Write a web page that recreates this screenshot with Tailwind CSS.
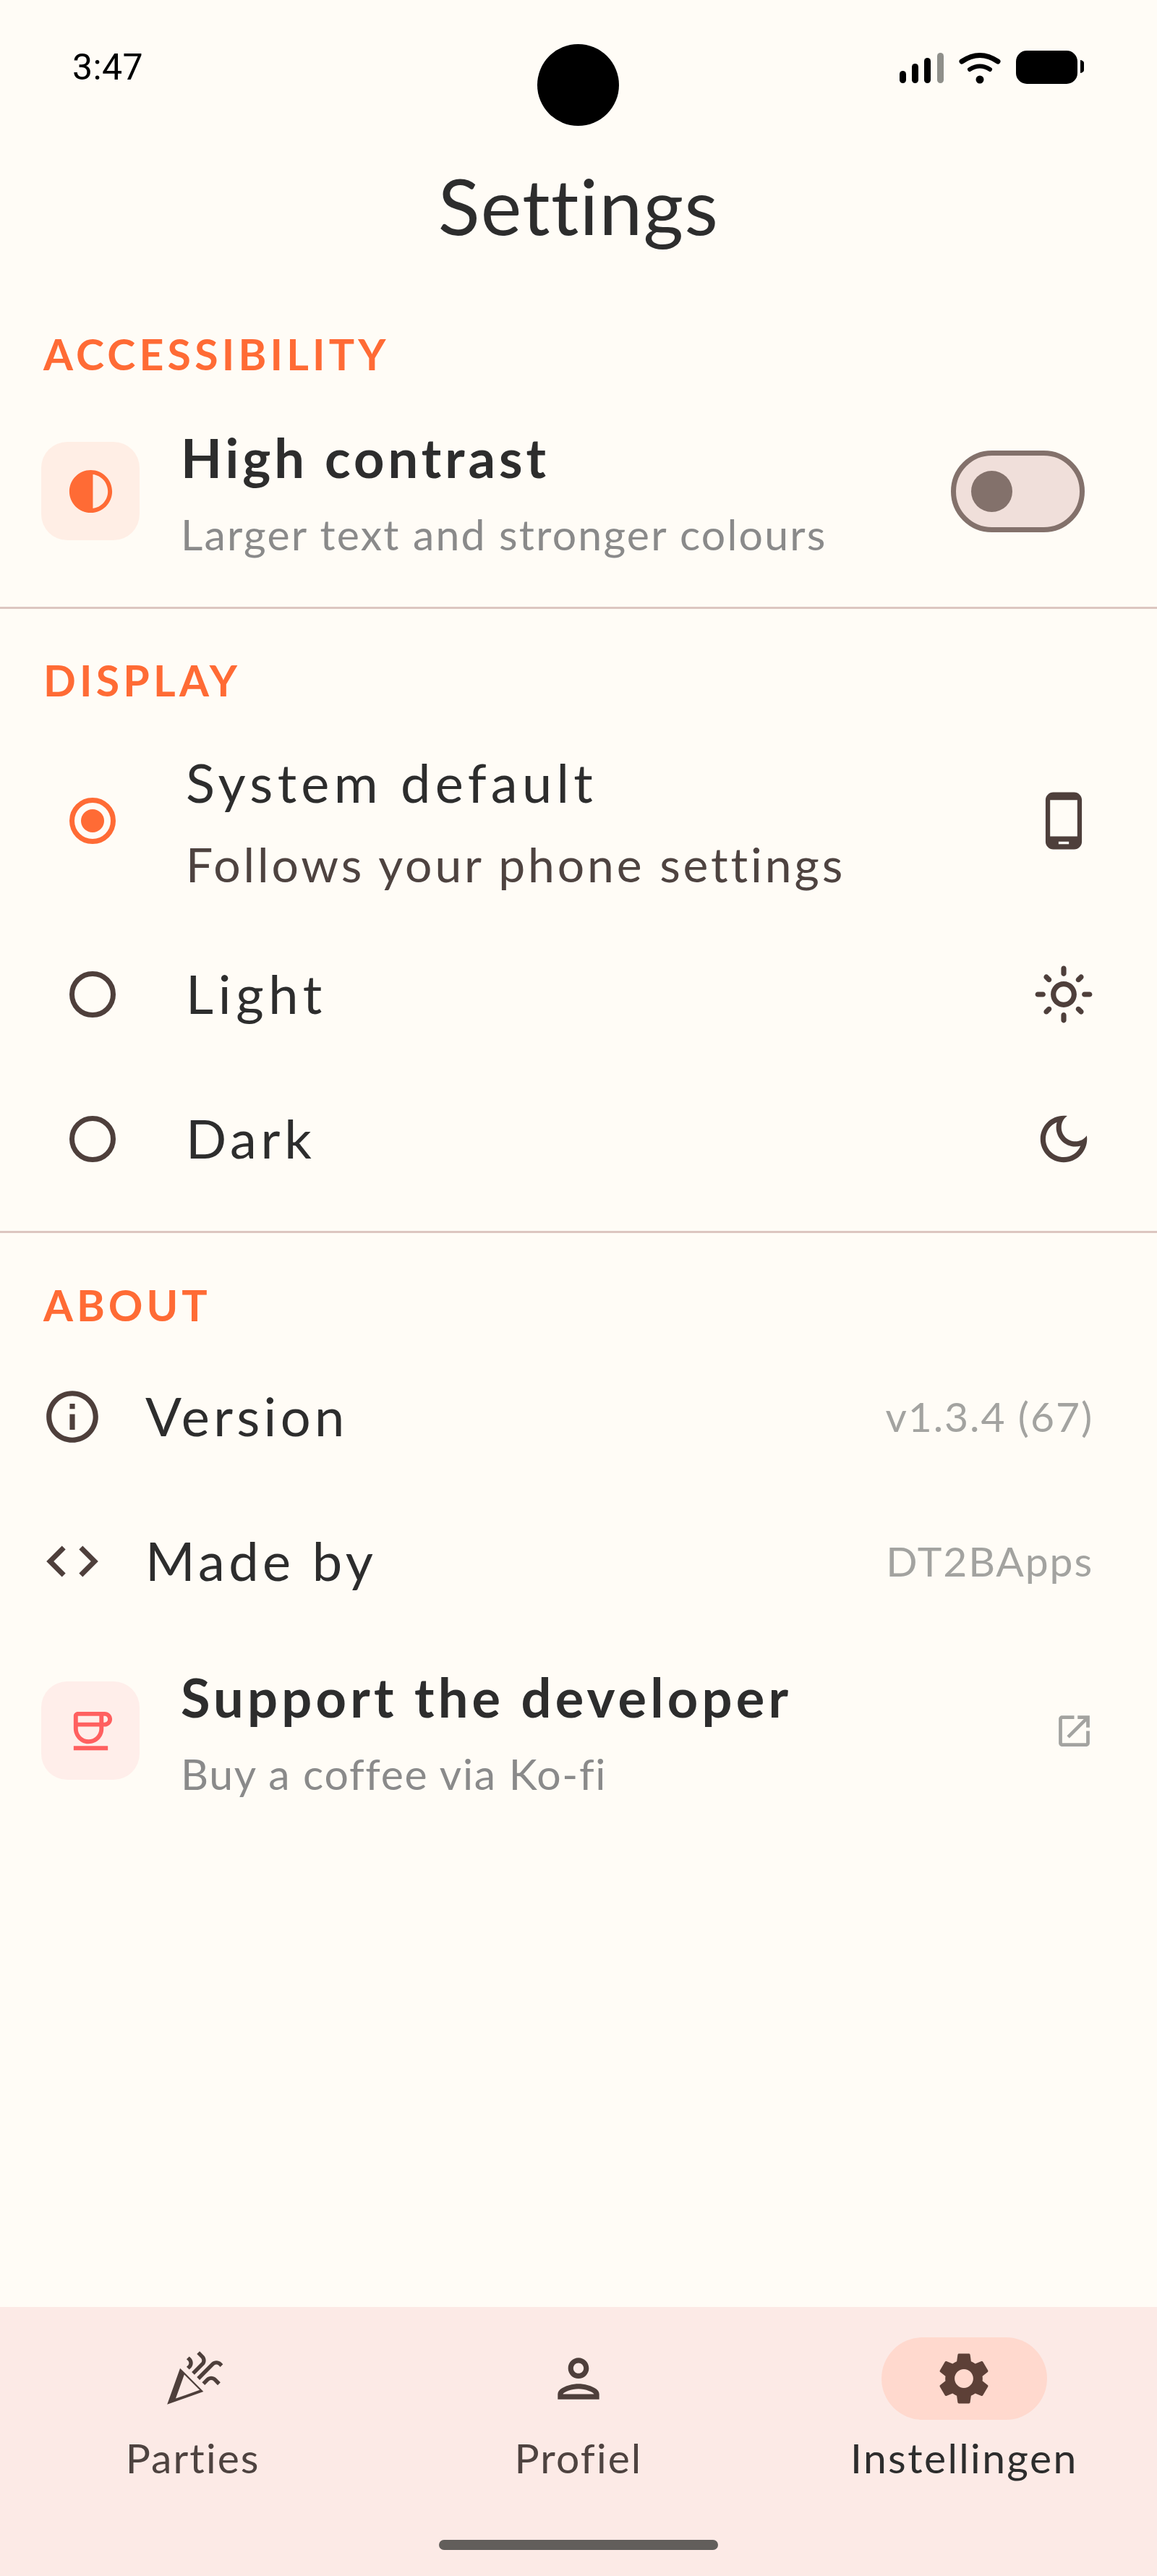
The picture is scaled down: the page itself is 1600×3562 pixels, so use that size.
<!DOCTYPE html>
<html lang="en">

<head>
    <meta charset="utf-8" />
    <meta name="viewport" content="width=device-width, initial-scale=1" />
    <title>Settings</title>
    <script src="https://cdn.jsdelivr.net/npm/@tailwindcss/browser@4"></script>
</head>

<body class="bg-[#fffcf6]">
    <div class="relative flex flex-col w-[1600px] h-[3562px] overflow-hidden font-['Lato',sans-serif] text-[#2d2d2d]">
        <!-- Camera cutout -->
        <div class="absolute left-[743px] top-[61px] w-[113px] h-[113px] rounded-full bg-black"></div>

        <!-- Status bar -->
        <div class="flex items-center justify-between h-[186px] pl-[100px] pr-[100px]">
            <span class="font-['Roboto',sans-serif] text-[50px] leading-none tracking-[0.400px] text-black">3:47</span>
            <svg class="w-[256px] h-[46px]" viewBox="0 0 256 46">
                <rect x="0" y="28" width="9" height="17" rx="4.5" fill="#000" />
                <rect x="17" y="18" width="9" height="27" rx="4.5" fill="#000" />
                <rect x="34" y="10" width="9" height="35" rx="4.5" fill="#000" />
                <rect x="52" y="3" width="9" height="42" rx="4.5" fill="#8f8f8a" />
                <path d="M86 15Q111-2 136 15" fill="none" stroke="#000" stroke-width="7" stroke-linecap="round" />
                <path d="M97 26Q111 17 125 26" fill="none" stroke="#000" stroke-width="6" stroke-linecap="round" />
                <circle cx="111" cy="40" r="5.5" fill="#000" />
                <rect x="161" y="0" width="85" height="46" rx="15" fill="#000" />
                <path d="M250 13c3 .5 5 2 5 4v10c0 2-2 3.500-5 4z" fill="#000" />
            </svg>
        </div>

        <!-- Title -->
        <h1 class="flex items-center justify-center h-[200px] pb-[3px] text-[107px] font-normal tracking-[1.300px]">Settings</h1>

        <!-- Accessibility -->
        <div class="flex items-center h-[90px] mt-[59px] pl-[60px] text-[59px] font-bold tracking-[5.200px] text-[#ff6b35]">ACCESSIBILITY</div>
        <div class="flex items-center h-[288px] pl-[57px] pr-[100px]">
            <div class="flex items-center justify-center w-[136px] h-[136px] rounded-[36px] bg-[#ffeee5]">
                <svg class="w-[71px] h-[71px] text-[#ff6b35]" viewBox="0 0 24 24" fill="currentColor"><path d="M12 22c5.520 0 10-4.480 10-10S17.520 2 12 2 2 6.480 2 12s4.480 10 10 10zm1-17.930c3.940.490 7 3.850 7 7.930s-3.050 7.440-7 7.930V4.070z" /></svg>
            </div>
            <div class="flex flex-col gap-[16px] pt-[4px] ml-[57px] flex-1">
                <div class="text-[74px] leading-[97px] font-bold tracking-[5px]">High contrast</div>
                <div class="pt-[2px] text-[59px] leading-[80px] tracking-[2.200px] text-[#8a8a8a]">Larger text and stronger colours</div>
            </div>
            <div class="flex items-center w-[185px] h-[113px] rounded-full border-[7px] border-[#83716b] bg-[#f0dfda] pl-[21px]">
                <div class="w-[57px] h-[57px] rounded-full bg-[#83716b]"></div>
            </div>
        </div>
        <div class="h-[3px] mt-[16px] bg-[#dcc6c0]"></div>

        <!-- Display -->
        <div class="flex items-center h-[90px] mt-[54px] pl-[60px] text-[59px] font-bold tracking-[5.200px] text-[#ff6b35]">DISPLAY</div>
        <div class="flex items-center h-[298px] pl-[96px] pr-[86px]">
            <div class="flex items-center justify-center w-[64px] h-[64px] rounded-full border-[7px] border-[#ff6b35]">
                <div class="w-[32px] h-[32px] rounded-full bg-[#ff6b35]"></div>
            </div>
            <div class="flex flex-col gap-[16px] pt-[6px] ml-[97px] flex-1">
                <div class="text-[74px] leading-[97px] tracking-[6.300px]">System default</div>
                <div class="text-[66px] leading-[97px] tracking-[3.850px] text-[#4e4340]">Follows your phone settings</div>
            </div>
            <svg class="w-[86px] h-[86px] text-[#4e3f3b]" viewBox="0 0 24 24" fill="currentColor"><path d="M16 1H8C6.340 1 5 2.340 5 4v16c0 1.660 1.340 3 3 3h8c1.660 0 3-1.340 3-3V4c0-1.660-1.340-3-3-3zm-2 20h-4v-1h4v1zm3.250-3H6.750V4h10.500v14z" /></svg>
        </div>
        <div class="flex items-center h-[182px] pl-[96px] pr-[86px]">
            <div class="w-[64px] h-[64px] rounded-full border-[7px] border-[#4e3f3b]"></div>
            <div class="ml-[97px] pb-[4px] flex-1 text-[74px] tracking-[6.700px]">Light</div>
            <svg class="w-[86px] h-[86px] text-[#4e3f3b]" viewBox="0 0 24 24" fill="currentColor"><path d="M12 9c1.650 0 3 1.350 3 3s-1.350 3-3 3-3-1.350-3-3 1.350-3 3-3m0-2c-2.760 0-5 2.240-5 5s2.240 5 5 5 5-2.240 5-5-2.240-5-5-5zM2 13h2c.550 0 1-.450 1-1s-.450-1-1-1H2c-.550 0-1 .450-1 1s.450 1 1 1zm18 0h2c.550 0 1-.450 1-1s-.450-1-1-1h-2c-.550 0-1 .450-1 1s.450 1 1 1zM11 2v2c0 .550.450 1 1 1s1-.450 1-1V2c0-.550-.450-1-1-1s-1 .450-1 1zm0 18v2c0 .550.450 1 1 1s1-.450 1-1v-2c0-.550-.450-1-1-1s-1 .450-1 1zM5.990 4.580c-.390-.390-1.030-.390-1.410 0-.390.390-.390 1.030 0 1.410l1.060 1.060c.390.390 1.030.390 1.410 0s.390-1.030 0-1.410L5.990 4.580zm12.370 12.370c-.390-.390-1.030-.390-1.410 0-.390.390-.390 1.030 0 1.410l1.060 1.060c.390.390 1.030.390 1.410 0 .390-.390.390-1.030 0-1.410l-1.060-1.060zm1.060-10.960c.390-.390.390-1.030 0-1.410-.390-.390-1.030-.390-1.410 0l-1.060 1.060c-.390.390-.390 1.030 0 1.410s1.030.390 1.410 0l1.060-1.060zM7.050 18.360c.390-.390.390-1.030 0-1.410-.390-.390-1.030-.390-1.410 0l-1.060 1.060c-.390.390-.390 1.030 0 1.410s1.030.390 1.410 0l1.060-1.060z" /></svg>
        </div>
        <div class="flex items-center h-[182px] mt-[18px] pl-[96px] pr-[86px]">
            <div class="w-[64px] h-[64px] rounded-full border-[7px] border-[#4e3f3b]"></div>
            <div class="ml-[97px] pb-[4px] flex-1 text-[74px] tracking-[5.700px]">Dark</div>
            <svg class="w-[86px] h-[86px] text-[#4e3f3b]" viewBox="0 0 24 24" fill="currentColor"><path d="M9.370 5.510c-.180.640-.270 1.310-.270 1.990 0 4.080 3.320 7.400 7.400 7.400.680 0 1.350-.090 1.990-.270C17.450 17.190 14.930 19 12 19c-3.860 0-7-3.140-7-7 0-2.930 1.810-5.450 4.370-6.490zM12 3c-4.970 0-9 4.030-9 9s4.030 9 9 9 9-4.030 9-9c0-.460-.040-.920-.100-1.360-.980 1.370-2.580 2.260-4.400 2.260-2.980 0-5.400-2.420-5.400-5.400 0-1.810.890-3.420 2.260-4.400-.440-.060-.900-.100-1.360-.100z" /></svg>
        </div>
        <div class="h-[3px] mt-[36px] bg-[#dcc6c0]"></div>

        <!-- About -->
        <div class="flex items-center h-[90px] mt-[55px] pl-[60px] text-[59px] font-bold tracking-[5px] text-[#ff6b35]">ABOUT</div>
        <div class="flex items-center h-[200px] mt-[9px] pl-[57px] pr-[88px]">
            <svg class="w-[86px] h-[86px] text-[#4e3f3b]" viewBox="0 0 24 24" fill="currentColor"><path d="M11 7h2v2h-2zm0 4h2v6h-2zm1-9C6.480 2 2 6.480 2 12s4.480 10 10 10 10-4.480 10-10S17.520 2 12 2zm0 18c-4.410 0-8-3.590-8-8s3.590-8 8-8 8 3.590 8 8-3.590 8-8 8z" /></svg>
            <div class="ml-[58px] pb-[3px] flex-1 text-[74px] tracking-[5.300px]">Version</div>
            <div class="text-[57px] tracking-[1.900px] text-[#a3a3a0]">v1.3.4 (67)</div>
        </div>
        <div class="flex items-center h-[200px] pl-[57px] pr-[88px]">
            <svg class="w-[86px] h-[86px] text-[#4e3f3b]" viewBox="0 0 24 24" fill="currentColor"><path d="M9.400 16.600L4.800 12l4.600-4.600L8 6l-6 6 6 6 1.400-1.400zm5.200 0l4.600-4.600-4.600-4.600L16 6l6 6-6 6-1.400-1.400z" /></svg>
            <div class="ml-[58px] pb-[3px] flex-1 text-[74px] tracking-[5.400px]">Made by</div>
            <div class="text-[57px] tracking-[1.900px] text-[#a3a3a0]">DT2BApps</div>
        </div>
        <div class="flex items-center h-[268px] pl-[57px] pr-[86px]">
            <div class="flex items-center justify-center w-[136px] h-[136px] rounded-[36px] bg-[#ffeeea]">
                <svg class="w-[71px] h-[71px] text-[#ff6060]" viewBox="0 0 24 24" fill="currentColor"><path d="M18.500 3H6c-1.100 0-2 .9-2 2v5.710c0 3.830 2.950 7.180 6.780 7.290 3.960.12 7.220-3.060 7.220-7v-1h.5c1.930 0 3.500-1.570 3.500-3.500S20.430 3 18.500 3zM16 5v3H6V5h10zm0 6c0 2.760-2.240 5-5 5s-5-2.240-5-5v-1h10v1zm2.500-3H18V5h.5c.830 0 1.500.670 1.500 1.500S19.330 8 18.500 8zM4 19h16v2H4z" /></svg>
            </div>
            <div class="flex flex-col gap-[16px] pt-[4px] ml-[57px] flex-1">
                <div class="text-[74px] leading-[97px] font-bold tracking-[5.200px]">Support the developer</div>
                <div class="pt-[2px] text-[59px] leading-[80px] tracking-[1.700px] text-[#8a8a8a]">Buy a coffee via Ko-fi</div>
            </div>
            <svg class="w-[57px] h-[57px] text-[#a3a3a0]" viewBox="0 0 24 24" fill="currentColor"><path d="M19 19H5V5h7V3H5c-1.110 0-2 .9-2 2v14c0 1.100.890 2 2 2h14c1.100 0 2-.9 2-2v-7h-2v7zM14 3v2h3.590l-9.830 9.830 1.410 1.410L19 6.410V10h2V3h-7z" /></svg>
        </div>

        <div class="flex-1"></div>

        <!-- Bottom navigation -->
        <nav class="relative grid grid-cols-3 h-[372px] bg-[#fceae6]">
            <div class="flex flex-col items-center pt-[42px]">
                <div class="flex items-center justify-center w-[229px] h-[114px]">
                    <svg class="w-[86px] h-[86px] text-[#4e3f3b]" viewBox="0 0 24 24" fill="currentColor"><path d="M2 22l14-5-9-9-5 14zm12.530-5.590L5.300 19.700l3.300-9.230 5.930 5.940zM14.530 12.530l5.590-5.590c.490-.490 1.280-.490 1.770 0l.590.590 1.060-1.060-.590-.590c-1.070-1.070-2.820-1.070-3.890 0l-5.590 5.590 1.060 1.060zM10.060 6.880l-.590.590 1.060 1.060.590-.590c1.070-1.070 1.070-2.820 0-3.890l-.590-.590-1.060 1.060.590.590c.480.480.480 1.280 0 1.770zM17.060 11.880l-1.590 1.590 1.060 1.060 1.590-1.590c.490-.490 1.280-.490 1.770 0l1.610 1.610 1.060-1.060-1.610-1.610c-1.080-1.070-2.820-1.070-3.890 0zM15.060 5.880l-3.590 3.590 1.060 1.060 3.590-3.590c1.070-1.070 1.070-2.820 0-3.890l-1.590-1.590-1.060 1.060 1.590 1.590c.480.490.480 1.290 0 1.770z" /></svg>
                </div>
                <div class="mt-[12px] text-[57px] leading-[80px] tracking-[2.100px] text-[#4e4340]">Parties</div>
            </div>
            <div class="flex flex-col items-center pt-[42px]">
                <div class="flex items-center justify-center w-[229px] h-[114px]">
                    <svg class="w-[86px] h-[86px] text-[#4e3f3b]" viewBox="0 0 24 24" fill="currentColor"><path d="M12 6c1.100 0 2 .9 2 2s-.9 2-2 2-2-.9-2-2 .9-2 2-2m0 10c2.700 0 5.800 1.290 6 2H6c.230-.720 3.310-2 6-2m0-12C9.790 4 8 5.790 8 8s1.790 4 4 4 4-1.790 4-4-1.790-4-4-4zm0 10c-2.670 0-8 1.340-8 4v2h16v-2c0-2.660-5.330-4-8-4z" /></svg>
                </div>
                <div class="mt-[12px] text-[57px] leading-[80px] tracking-[2.100px] text-[#4e4340]">Profiel</div>
            </div>
            <div class="flex flex-col items-center pt-[42px]">
                <div class="flex items-center justify-center w-[229px] h-[114px] rounded-full bg-[#ffd9ce]">
                    <svg class="w-[86px] h-[86px] text-[#5d4037]" viewBox="0 0 24 24" fill="currentColor"><path d="M19.140 12.940c.040-.300.060-.610.060-.940 0-.320-.020-.640-.070-.940l2.030-1.580c.180-.140.230-.410.120-.610l-1.920-3.320c-.120-.220-.370-.290-.590-.220l-2.390.960c-.500-.380-1.030-.700-1.620-.940l-.360-2.540c-.040-.240-.240-.410-.480-.410h-3.840c-.240 0-.430.170-.47.410l-.360 2.540c-.590.240-1.130.570-1.620.940l-2.390-.960c-.220-.080-.470 0-.590.220L2.740 8.870c-.120.210-.080.470.12.610l2.030 1.580c-.050.300-.090.630-.090.940s.020.640.07.940l-2.030 1.580c-.180.140-.230.410-.12.610l1.920 3.320c.120.220.370.290.590.220l2.390-.96c.500.380 1.030.700 1.620.940l.360 2.540c.050.240.240.410.48.410h3.840c.240 0 .440-.17.470-.41l.360-2.540c.590-.240 1.130-.560 1.620-.94l2.390.96c.220.080.470 0 .590-.22l1.920-3.320c.120-.220.070-.470-.120-.61l-2.010-1.580zM12 15.600c-1.980 0-3.600-1.620-3.600-3.600s1.620-3.600 3.600-3.600 3.600 1.620 3.600 3.600-1.620 3.600-3.600 3.600z" /></svg>
                </div>
                <div class="mt-[12px] text-[57px] leading-[80px] tracking-[2.400px] text-[#2d2d2d]">Instellingen</div>
            </div>
            <div class="absolute left-[607px] top-[322px] w-[386px] h-[14px] rounded-full bg-[#625e5b]"></div>
        </nav>
    </div>
</body>

</html>
